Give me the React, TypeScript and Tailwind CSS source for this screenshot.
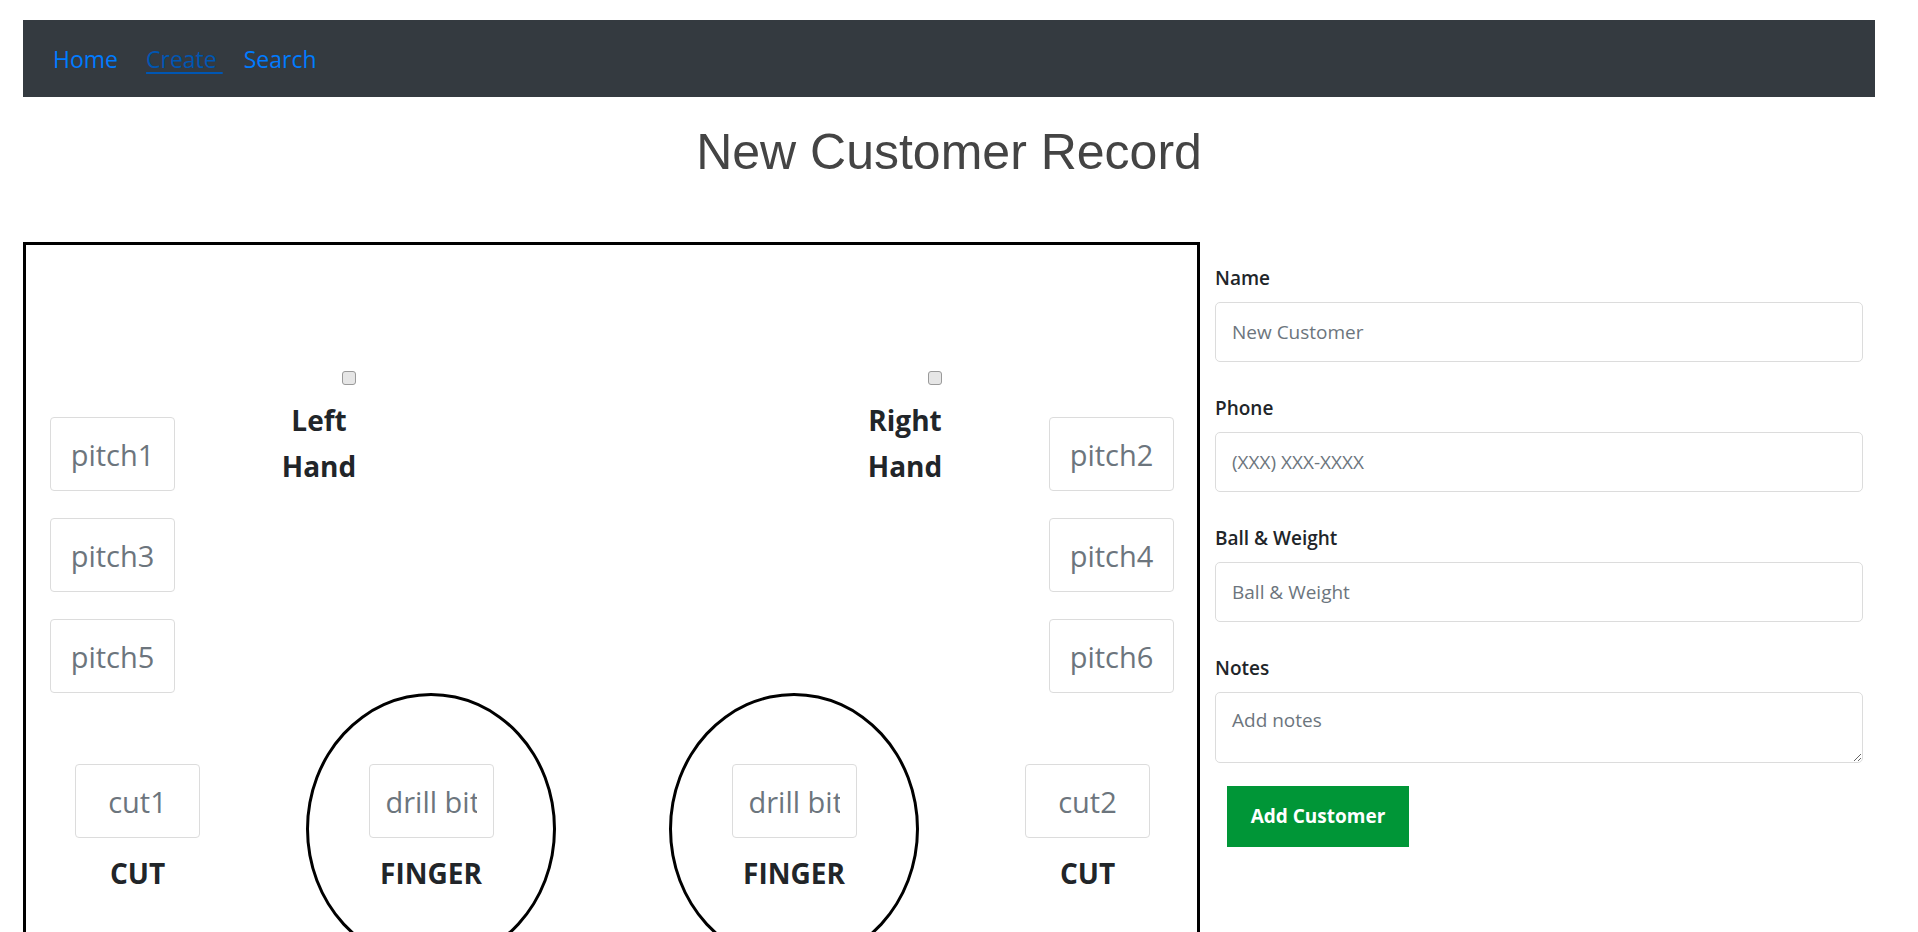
import React from "react";

// shared look for the small centred boxes inside the drilling chart
const chartInput =
  "h-[74px] w-[125px] rounded-[4px] border border-[#dcdcdc] bg-white px-[16px] text-center text-[29px] text-[#495057] placeholder:text-[#6c757d] outline-none";

const formInput =
  "h-[60px] w-full rounded-[5px] border border-[#dcdcdc] bg-white px-[16px] text-[19px] text-[#495057] placeholder:text-[#6c757d] outline-none";

function HandLabel({ side }: { side: string }) {
  return (
    <div className="flex w-[120px] flex-col items-center">
      <input
        type="checkbox"
        className="ml-[60px] mt-[2px] h-[14px] w-[14px] appearance-none rounded-[3px] border border-[#9a9a9a] bg-[#e6e6e6]"
      />
      <p className="mt-[12px] text-center text-[28px] font-bold leading-[46px] text-[#212529]">
        {side}
        <br />
        Hand
      </p>
    </div>
  );
}

function PitchColumn({ names }: { names: string[] }) {
  return (
    <div className="mt-[48px] flex flex-col gap-[27px]">
      {names.map((n) => (
        <input key={n} type="text" placeholder={n} className={chartInput} />
      ))}
    </div>
  );
}

function CutSlot({ name, className = "" }: { name: string; className?: string }) {
  return (
    <div className={"flex w-[125px] flex-col items-center pt-[71px] " + className}>
      <input type="text" placeholder={name} className={chartInput} />
      <p className="mt-[12px] text-[28px] font-bold leading-[46px] text-[#212529]">CUT</p>
    </div>
  );
}

function FingerHole({ className = "" }: { className?: string }) {
  return (
    <div
      className={
        "flex h-[272px] w-[250px] flex-col items-center rounded-[50%] border-[3px] border-black pt-[68px] " +
        className
      }
    >
      <input type="text" placeholder="drill bit size" className={chartInput} />
      <p className="mt-[12px] text-[28px] font-bold leading-[46px] text-[#212529]">FINGER</p>
    </div>
  );
}

function FormField({ label, placeholder }: { label: string; placeholder: string }) {
  return (
    <div className="mb-[32px]">
      <label className="mb-[10px] block text-[19px] font-semibold leading-[28px] text-[#212529]">
        {label}
      </label>
      <input type="text" placeholder={placeholder} className={formInput} />
    </div>
  );
}

export default function App() {
  return (
    <div className="min-h-[1100px] bg-white pt-[20px] font-['Open_Sans','Noto_Sans',sans-serif]">
      {/* NAVBAR */}
      <nav className="ml-[23px] flex h-[77px] w-[1852px] items-center bg-[#343a40] pl-[30px] text-[23px] leading-[34px]">
        <a href="/" className="text-[#007bff]">
          Home
        </a>
        <a href="/create" className="ml-[28px] text-[#0056b3] underline underline-offset-[4px]">
          Create&nbsp;
        </a>
        <a href="/search" className="ml-[21px] text-[#007bff]">
          Search
        </a>
      </nav>

      <div className="ml-[23px] w-[1852px]">
        <h1 className="mt-[25px] text-center font-['Liberation_Sans',Arial,sans-serif] text-[50px] leading-[60px] text-[#444]">
          New Customer Record
        </h1>

        <div className="mt-[60px] flex items-start">
          {/* Ball chart */}
          <div className="h-[800px] w-[1177px] border-[3px] border-black">
            <div className="flex justify-between pl-[24px] pr-[23px] pt-[124px]">
              <div className="flex items-start">
                <PitchColumn names={["pitch1", "pitch3", "pitch5"]} />
                <div className="ml-[84px]">
                  <HandLabel side="Left" />
                </div>
              </div>
              <div className="flex items-start">
                <div className="mr-[84px]">
                  <HandLabel side="Right" />
                </div>
                <PitchColumn names={["pitch2", "pitch4", "pitch6"]} />
              </div>
            </div>

            <div className="flex items-start pl-[49px]">
              <CutSlot name="cut1" />
              <FingerHole className="ml-[106px]" />
              <FingerHole className="ml-[113px]" />
              <CutSlot name="cut2" className="ml-[106px]" />
            </div>
          </div>

          {/* Form */}
          <div className="w-[675px] pl-[15px] pr-[12px] pt-[22px]">
            <FormField label="Name" placeholder="New Customer" />
            <FormField label="Phone" placeholder="(XXX) XXX-XXXX" />
            <FormField label="Ball & Weight" placeholder="Ball & Weight" />
            <div>
              <label className="mb-[10px] block text-[19px] font-semibold leading-[28px] text-[#212529]">
                Notes
              </label>
              <textarea
                placeholder="Add notes"
                className="block h-[71px] w-full rounded-[5px] border border-[#dcdcdc] bg-white px-[16px] pb-[8px] pt-[13px] text-[19px] text-[#495057] placeholder:text-[#6c757d] outline-none"
              />
            </div>
            <button className="ml-[12px] mt-[23px] h-[61px] w-[182px] bg-[#009637] text-[19px] font-bold text-white">
              Add Customer
            </button>
          </div>
        </div>
      </div>
    </div>
  );
}
